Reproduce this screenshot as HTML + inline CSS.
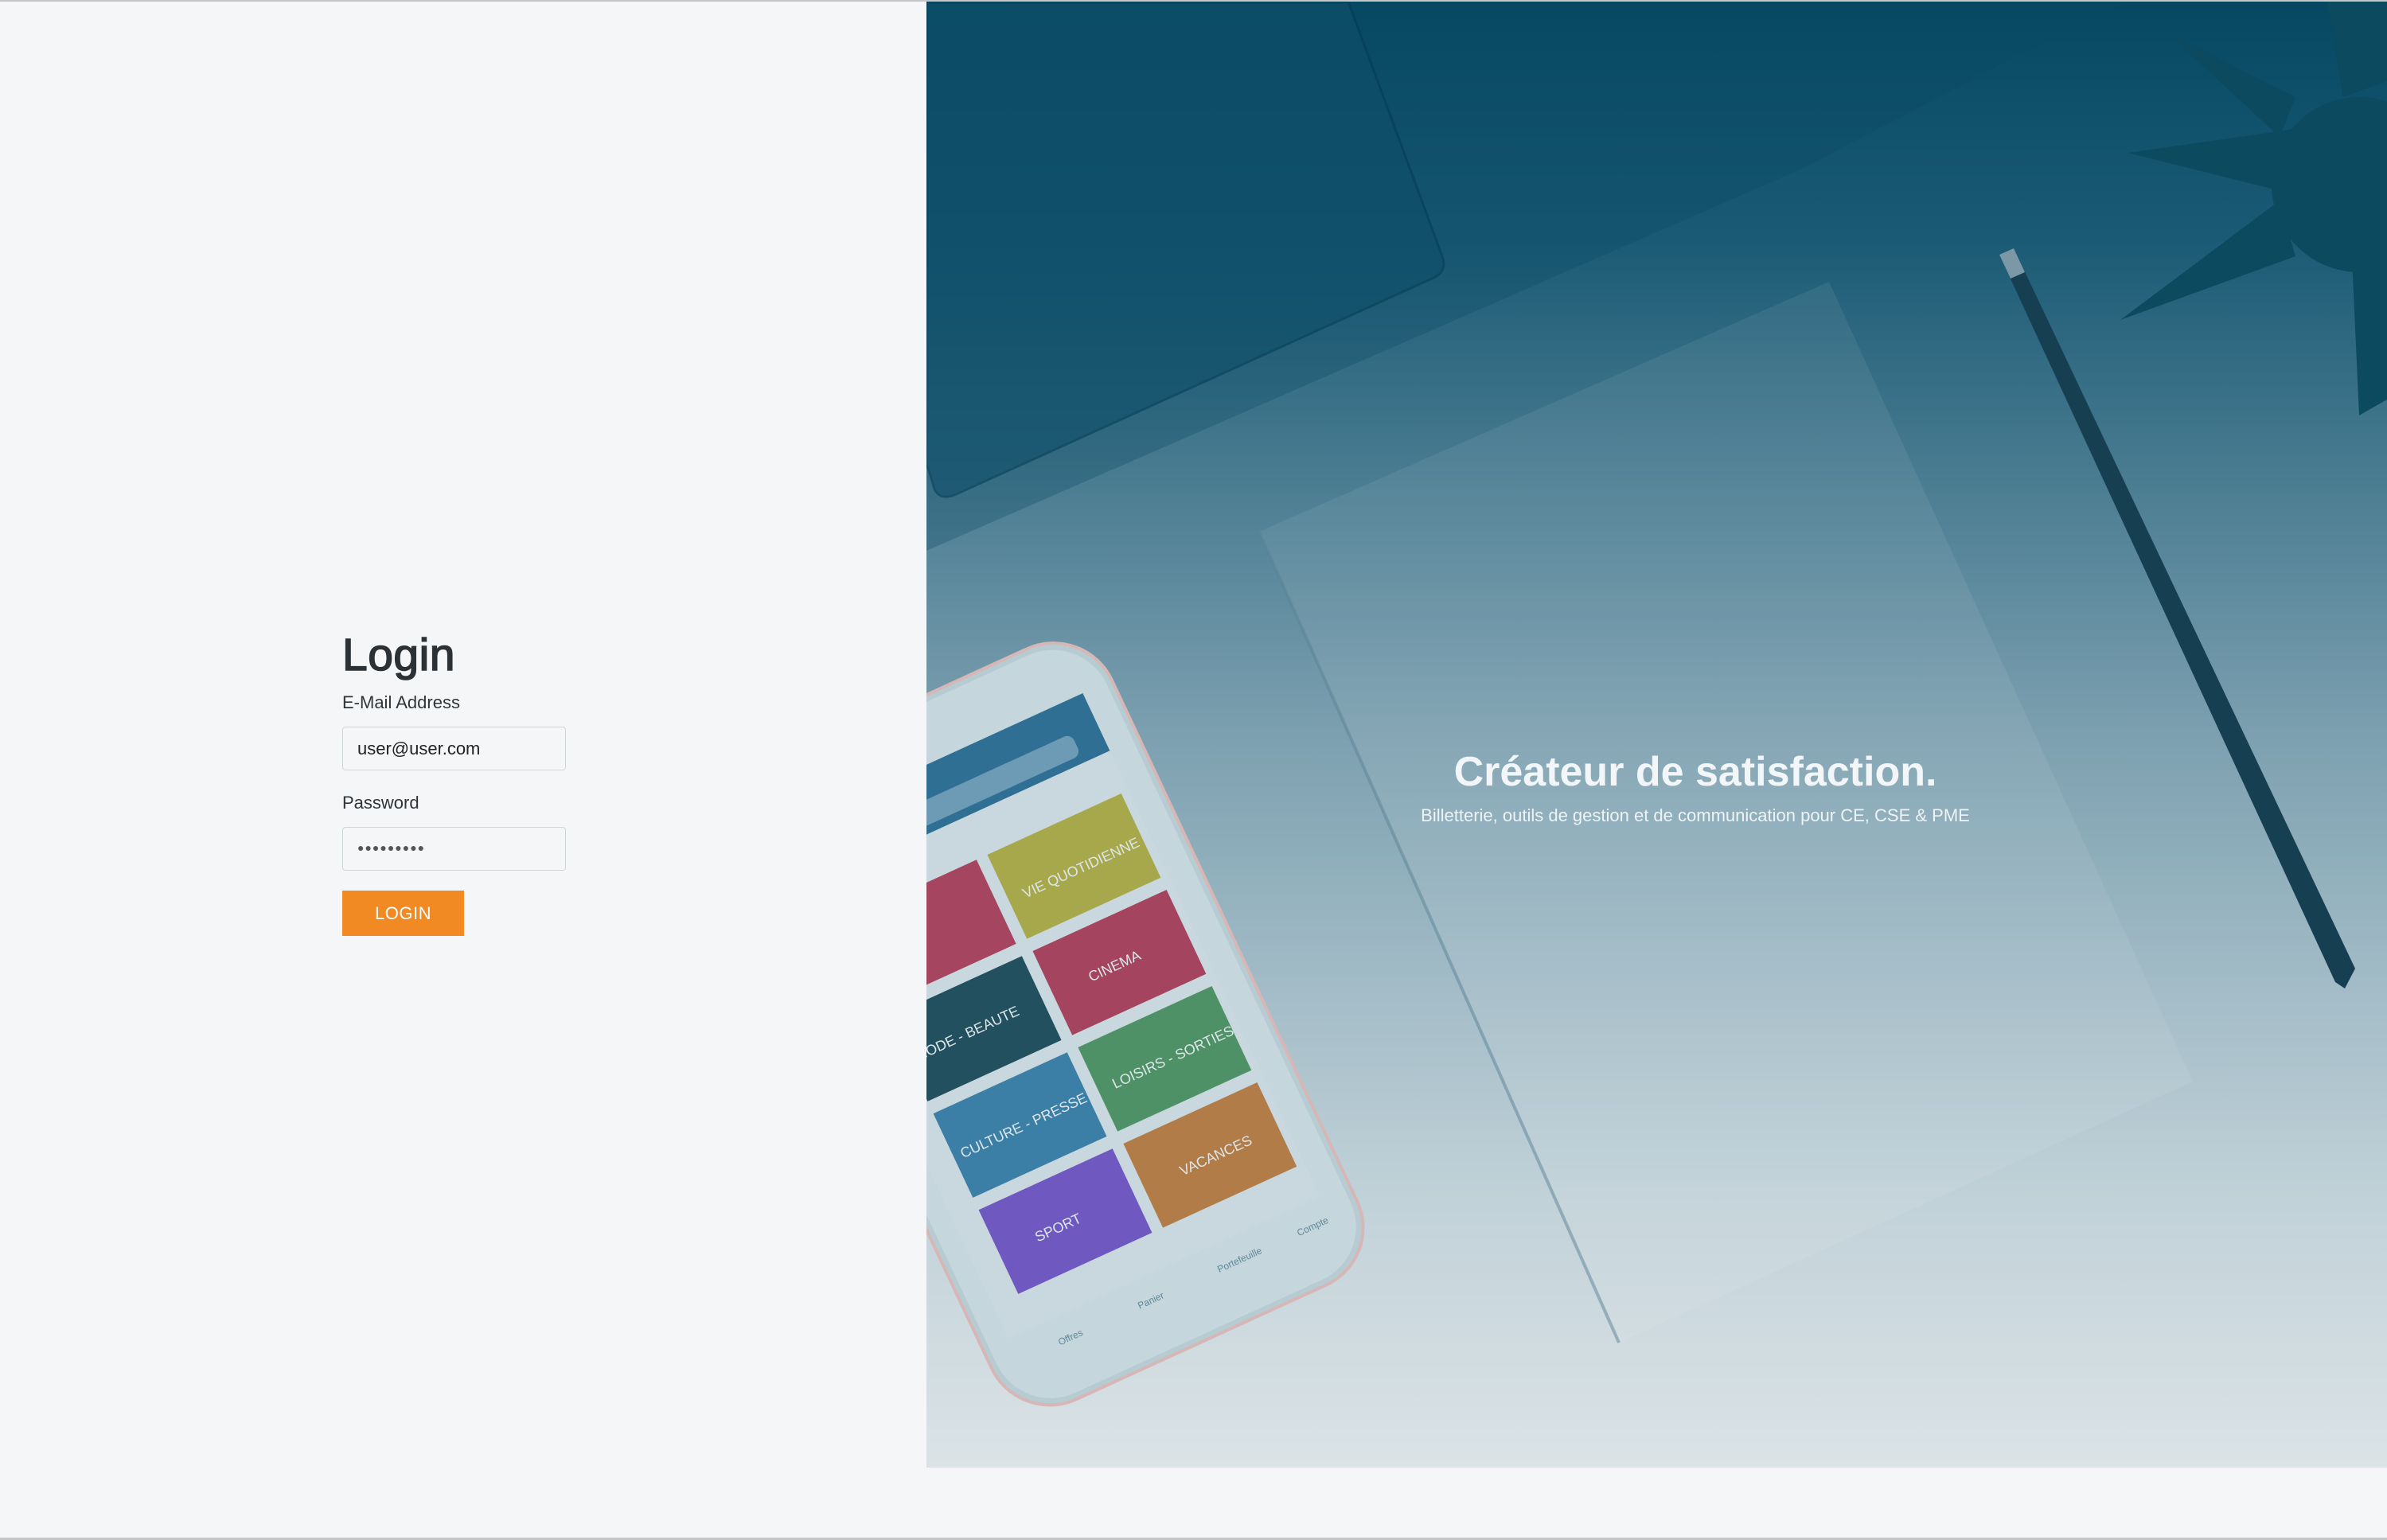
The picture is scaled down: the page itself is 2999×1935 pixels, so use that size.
<!DOCTYPE html>
<html><head><meta charset="utf-8"><style>
html,body{margin:0;padding:0}
body{width:2999px;height:1935px;background:#f5f6f8;position:relative;overflow:hidden;font-family:"Liberation Sans",sans-serif}
.tl{position:absolute;left:0;top:0;width:2999px;height:2px;background:#c4c6c8}
.bl{position:absolute;left:0;top:1932px;width:2999px;height:3px;background:#c4c6c8}
h1{position:absolute;left:430px;top:790px;margin:0;font-size:57px;font-weight:normal;-webkit-text-stroke:1.6px #2b3135;color:#2b3135;letter-spacing:0.5px}
.lab{position:absolute;left:430px;font-size:22px;color:#2e3438}
.inp{position:absolute;left:430px;width:281px;height:55px;border:1px solid #cfd6da;border-radius:4px;background:#f5f6f8;box-sizing:border-box;font-size:22px;color:#222;padding-left:18px;line-height:53px}
.btn{position:absolute;left:430px;top:1119px;width:153px;height:57px;background:#f28a24;color:#fff;font-size:22px;text-align:center;line-height:57px;letter-spacing:0.5px}
.panel{position:absolute;left:1164px;top:2px;width:1835px;height:1842px;overflow:hidden}
</style></head><body>
<div class="tl"></div><div class="bl"></div>
<h1>Login</h1>
<div class="lab" style="top:870px">E-Mail Address</div>
<div class="inp" style="top:913px">user@user.com</div>
<div class="lab" style="top:996px">Password</div>
<div class="inp" style="top:1039px;font-size:14px;letter-spacing:1px;line-height:50px;color:#555">●●●●●●●●●</div>
<div class="btn">LOGIN</div>
<div class="panel">
<svg width="1835" height="1842" viewBox="0 0 1835 1842" xmlns="http://www.w3.org/2000/svg">
<defs>
<linearGradient id="bg" x1="0" y1="0" x2="0" y2="1">
<stop offset="0" stop-color="#064862"/>
<stop offset="0.16" stop-color="#1a5a74"/>
<stop offset="0.33" stop-color="#4b7d92"/>
<stop offset="0.5" stop-color="#7ca0b0"/>
<stop offset="0.66" stop-color="#a0bac5"/>
<stop offset="0.82" stop-color="#c2d2d9"/>
<stop offset="1" stop-color="#dbe3e6"/>
</linearGradient>
</defs>
<rect width="1835" height="1842" fill="url(#bg)"/>
<!-- laptop body -->
<polygon points="0,0 1500,0 1100,210 0,690" fill="#0a4a64" opacity="0.3"/>
<path d="M0,0 L530,0 L648,320 Q655,340 635,348 L35,620 Q12,628 8,605 L0,580 Z" fill="#0e4e68" opacity="0.6" stroke="#053d55" stroke-width="3"/>
<!-- notebook -->
<polygon points="418,666 1134,352 1591,1357 870,1685" fill="#ffffff" opacity="0.07"/>
<line x1="418" y1="666" x2="870" y2="1685" stroke="#5b8396" stroke-width="4" opacity="0.5"/>
<!-- pencil -->
<polygon points="1348,318 1366,310 1795,1215 1782,1240 1770,1232" fill="#163f52"/>
<polygon points="1348,318 1366,310 1380,340 1362,348" fill="#7b98a6"/>
<!-- plant -->
<g fill="#0b4a5f">
<circle cx="1800" cy="230" r="110"/>
<polygon points="1510,190 1720,160 1710,240"/>
<polygon points="1500,400 1700,250 1720,320"/>
<polygon points="1560,40 1720,120 1700,170"/>
<polygon points="1760,0 1835,0 1835,100 1780,120"/>
<polygon points="1790,300 1835,300 1835,500 1800,520"/>
</g>
<!-- phone -->
<g transform="matrix(0.909,-0.416,0.425,0.903,76.5,1072)">
<rect x="-270" y="-215" width="505" height="885" rx="80" fill="#b7cbd3" stroke="#d6b7b6" stroke-width="4"/>
<rect x="-262" y="-207" width="489" height="869" rx="74" fill="#c6d6dd"/>
<rect x="-235" y="-135" width="430" height="700" fill="#c9d8de"/>
<rect x="-235" y="-135" width="430" height="80" fill="#2f6f93"/>
<rect x="-200" y="-95" width="360" height="30" rx="10" fill="#6d9bb6"/>
<g>
<rect x="-200" y="0" width="185" height="117" fill="#a6455f"/>
<rect x="-200" y="134" width="185" height="117" fill="#22505f"/>
<rect x="-200" y="268" width="185" height="117" fill="#3b7ea6"/>
<rect x="-200" y="402" width="185" height="117" fill="#6f58c0"/>
<rect x="0" y="0" width="185" height="117" fill="#a7a84b"/>
<rect x="0" y="134" width="185" height="117" fill="#a4445e"/>
<rect x="0" y="268" width="185" height="117" fill="#4e9166"/>
<rect x="0" y="402" width="185" height="117" fill="#b27c48"/>
</g>
<g fill="#dde6ea" font-size="18" font-family="Liberation Sans,sans-serif">
<text x="20" y="70">VIE QUOTIDIENNE</text>
<text x="50" y="200">CINEMA</text>
<text x="20" y="335">LOISIRS - SORTIES</text>
<text x="50" y="470">VACANCES</text>
<text x="-190" y="70">SOLDES</text>
<text x="-190" y="200">MODE - BEAUTE</text>
<text x="-190" y="335">CULTURE - PRESSE</text>
<text x="-150" y="470">SPORT</text>
</g>
<g fill="#5e8798" font-size="12" font-family="Liberation Sans,sans-serif">
<text x="-180" y="600">Offres</text><text x="-70" y="600">Panier</text><text x="40" y="600">Portefeuille</text><text x="150" y="600">Compte</text>
</g>
</g>
<text x="966" y="985" text-anchor="middle" font-size="52" font-weight="bold" fill="#f2f6f8" font-family="Liberation Sans,sans-serif">Créateur de satisfaction.</text>
<text x="966" y="1030" text-anchor="middle" font-size="22" fill="#eef3f5" font-family="Liberation Sans,sans-serif">Billetterie, outils de gestion et de communication pour CE, CSE &amp; PME</text>
</svg>
</div>
</body></html>
